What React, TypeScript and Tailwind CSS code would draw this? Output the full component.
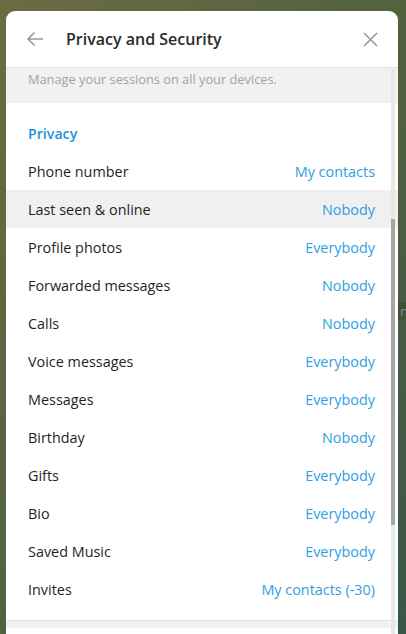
import React from 'react';

const rows: { label: string; value: string; active?: boolean }[] = [
  { label: 'Phone number', value: 'My contacts' },
  { label: 'Last seen & online', value: 'Nobody', active: true },
  { label: 'Profile photos', value: 'Everybody' },
  { label: 'Forwarded messages', value: 'Nobody' },
  { label: 'Calls', value: 'Nobody' },
  { label: 'Voice messages', value: 'Everybody' },
  { label: 'Messages', value: 'Everybody' },
  { label: 'Birthday', value: 'Nobody' },
  { label: 'Gifts', value: 'Everybody' },
  { label: 'Bio', value: 'Everybody' },
  { label: 'Saved Music', value: 'Everybody' },
  { label: 'Invites', value: 'My contacts (-30)' },
];

export default function App() {
  return (
    <div
      className="relative w-[406px] h-[634px] overflow-hidden bg-gradient-to-br from-[#6c6b43] via-[#52623f] to-[#3b5647] pt-[11px] pl-[6px]"
      style={{ fontFamily: '"Open Sans", "Noto Sans", sans-serif' }}
    >
      {/* chat behind the dialog */}
      <div className="absolute left-[398px] top-[302px] w-[10px] h-[18px] bg-[#415039] text-[13px] leading-[18px] text-[#8a8f7e] pl-[2px]">
        n
      </div>

      <div className="w-[392px] h-[623px] bg-white rounded-t-[9px] flex flex-col overflow-hidden">
        {/* Header */}
        <div className="h-[56px] shrink-0 flex items-center pl-[17px] pr-[20px]">
          <button className="w-[24px] h-[24px] flex items-center justify-center text-[#999]">
            <svg width="18" height="16" viewBox="0 0 18 16" fill="none" stroke="currentColor" strokeWidth="1.6">
              <path d="M17 8H2.5" />
              <path d="M8.5 1.5L2 8l6.5 6.5" />
            </svg>
          </button>
          <span className="ml-[19px] text-[16px] font-semibold text-[#2b2b2b] leading-none">Privacy and Security</span>
          <button className="ml-auto w-[16px] h-[16px] flex items-center justify-center text-[#9a9a9a]">
            <svg width="15" height="15" viewBox="0 0 15 15" fill="none" stroke="currentColor" strokeWidth="1.6">
              <path d="M1 1l13 13M14 1L1 14" />
            </svg>
          </button>
        </div>

        {/* Scroll area */}
        <div className="relative flex-1 flex flex-col">
          <div className="bg-[#f1f1f1] border-t border-[#e3e3e3] pt-[1px] pb-[14px] px-[22px]">
            <p className="text-[12.8px] leading-[20px] text-[#a3a3a3]">Manage your sessions on all your devices.</p>
          </div>

          <div className="pt-[21px] pb-[8px] px-[22px]">
            <p className="text-[14.2px] leading-[20px] font-semibold text-[#2193dc]">Privacy</p>
          </div>

          {rows.map((r) => (
            <div
              key={r.label}
              className={`h-[38px] flex items-center justify-between pt-[2px] pl-[22px] pr-[23px] text-[14.4px] ${r.active ? 'bg-[#f0f0f0]' : ''}`}
            >
              <span className="text-[#1f1f1f]">{r.label}</span>
              <span className="text-[#319ee2]">{r.value}</span>
            </div>
          ))}

          <div className="h-[12px]" />
          <div className="h-[8px] bg-[#f1f1f1] border-t border-[#e3e3e3]" />
          <div className="flex-1" />

          {/* scrollbar */}
          <div className="absolute right-[3px] top-[2px] bottom-0 w-[4px] bg-[#e8e8e8]">
            <div className="absolute left-0 right-0 top-[150px] h-[306px] bg-[#a6a6a6]" />
          </div>
        </div>
      </div>
    </div>
  );
}
